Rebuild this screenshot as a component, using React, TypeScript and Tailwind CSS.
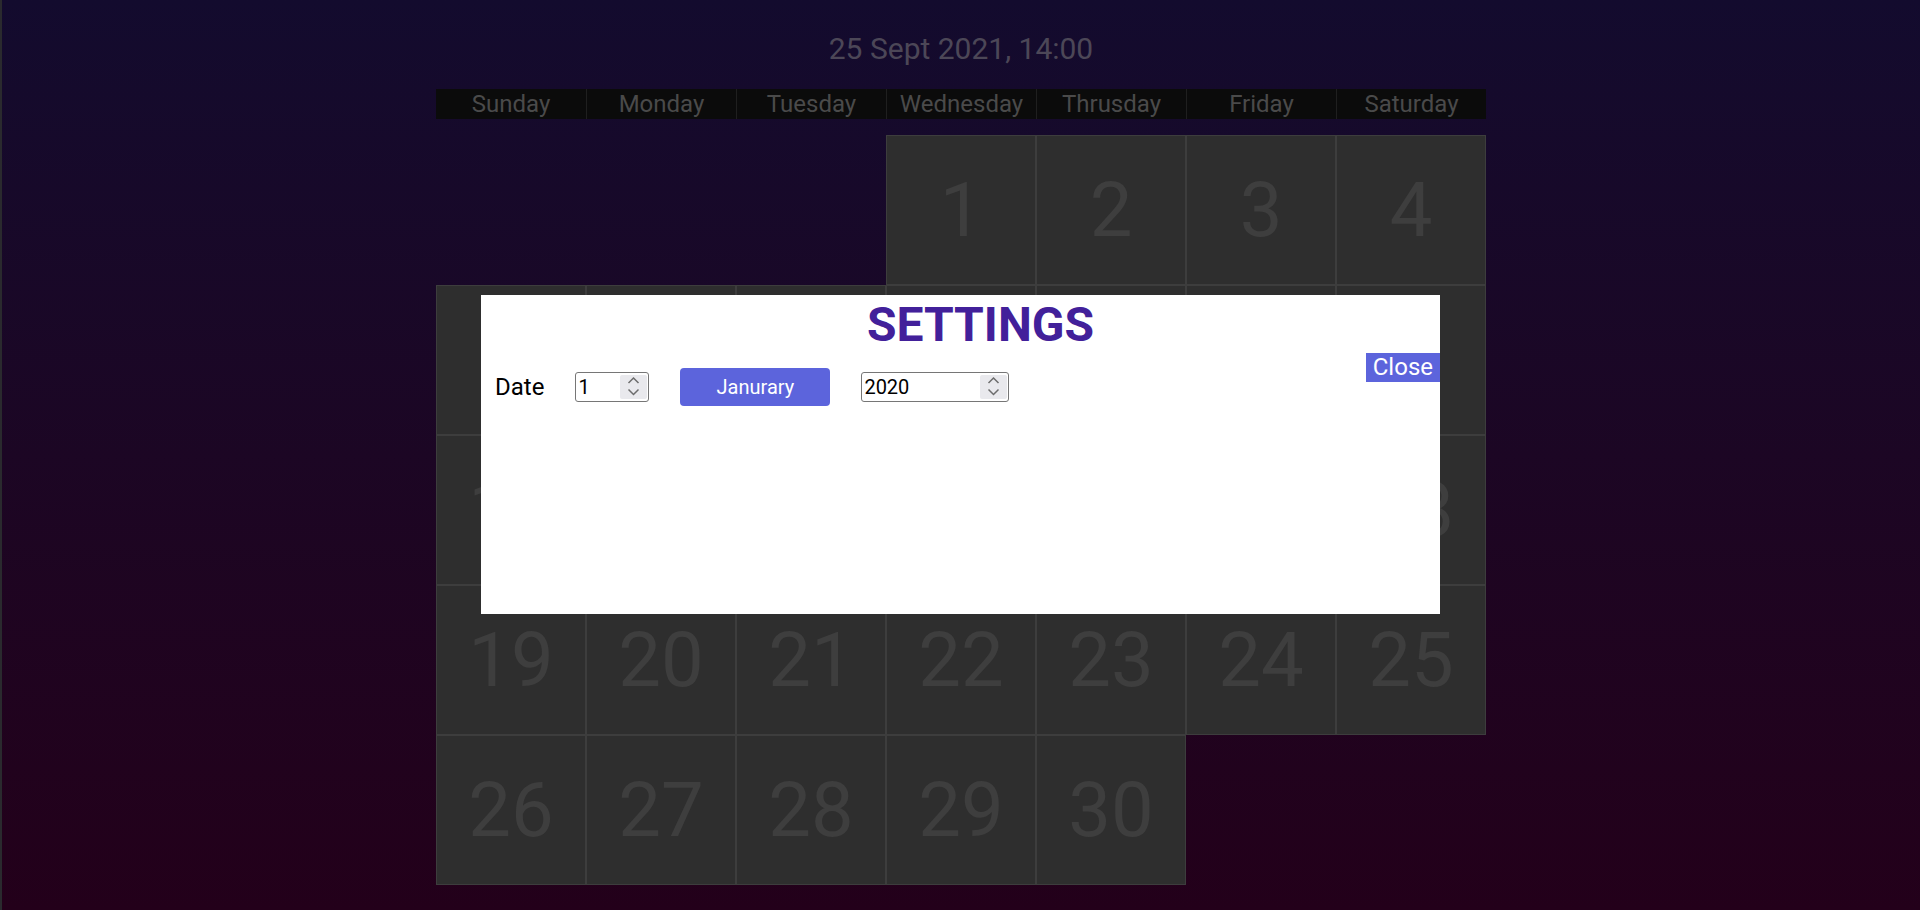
import React from 'react';

const days = ['Sunday', 'Monday', 'Tuesday', 'Wednesday', 'Thrusday', 'Friday', 'Saturday'];

// Sept 2021 starts on a Wednesday
const cells: (number | null)[] = [
  null, null, null,
  ...Array.from({ length: 30 }, (_, i) => i + 1),
];

const Spinner: React.FC = () => (
  <div className="w-[27px] h-[24px] bg-[#e9e9ed] rounded-[2px] shrink-0">
    <svg width="27" height="24" viewBox="0 0 27 24" fill="none">
      <path d="M8.5 8 L13.5 3 L18.5 8" stroke="#6d6d6d" strokeWidth="1.5" />
      <path d="M8.5 14.5 L13.5 19.5 L18.5 14.5" stroke="#6d6d6d" strokeWidth="1.5" />
    </svg>
  </div>
);

const NumberBox: React.FC<{ value: string; width: string }> = ({ value, width }) => (
  <div className={`${width} h-[30px] border border-[#767676] rounded-[3px] bg-white flex items-center pl-[2px] pr-[1px]`}>
    <input
      readOnly
      value={value}
      className="flex-1 min-w-0 bg-transparent text-[20px] leading-[24px] text-black outline-none"
    />
    <Spinner />
  </div>
);

const App: React.FC = () => {
  return (
    <div className="relative min-h-[910px] w-full border-l-2 border-[#2a2a2e] bg-gradient-to-b from-[#130b2e] to-[#23001a] font-['Roboto',sans-serif] flex flex-col items-center">
      {/* Date title */}
      <h1 className="pt-[31px] text-[30px] leading-[36px] text-[#4c4757]">25 Sept 2021, 14:00</h1>

      {/* Day headers */}
      <div className="mt-[22px] grid grid-cols-7 w-[1050px] h-[30px] bg-[#0b0b0b]">
        {days.map((d, i) => (
          <div
            key={d}
            className={`text-center text-[24px] leading-[30px] text-[#4a4a4a] ${i > 0 ? 'border-l border-[#1f1f1f]' : ''}`}
          >
            {d}
          </div>
        ))}
      </div>

      {/* Calendar grid */}
      <div className="mt-[16px] grid grid-cols-7 w-[1050px]">
        {cells.map((n, i) =>
          n === null ? (
            <div key={i} className="h-[150px]" />
          ) : (
            <div
              key={i}
              className="h-[150px] bg-[#2e2e2e] border-[0.5px] border-[#3d3d3d] flex items-center justify-center text-[76px] leading-none text-[#3e3e3e]"
            >
              {n}
            </div>
          )
        )}
      </div>

      {/* Settings modal */}
      <div className="absolute top-[295px] left-[479px] w-[959px] h-[319px] bg-white flex flex-col">
        <h2 className="pt-[6px] pl-[40px] text-center text-[48px] leading-[48px] font-bold text-[#42209a]">SETTINGS</h2>
        <div className="mt-[4px] flex items-start justify-between">
          <div className="mt-[15px] pl-[14px] flex items-center gap-[31px]">
            <span className="text-[24px] leading-[30px] text-black">Date</span>
            <NumberBox value="1" width="w-[74px]" />
            <button className="w-[150px] h-[38px] rounded-[4px] bg-[#5c64dc] text-white text-[20px]">
              Janurary
            </button>
            <NumberBox value="2020" width="w-[148px]" />
          </div>
          <button className="bg-[#5c64dc] text-white text-[24px] leading-[29px] px-[7px]">Close</button>
        </div>
      </div>
    </div>
  );
};

export default App;
